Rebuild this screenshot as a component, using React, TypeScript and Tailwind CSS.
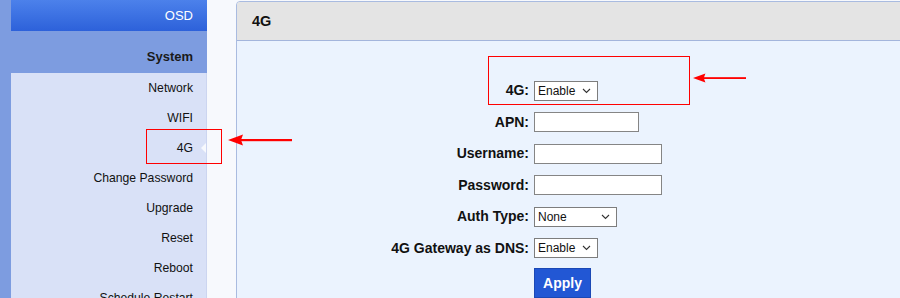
import React from "react";

const menu = ["Network", "WIFI", "4G", "Change Password", "Upgrade", "Reset", "Reboot", "Schedule Restart"];

type Row = { label: string; kind: "select" | "input"; value?: string; w: string };

const rows: Row[] = [
  { label: "4G:", kind: "select", value: "Enable", w: "w-[64px]" },
  { label: "APN:", kind: "input", w: "w-[105px]" },
  { label: "Username:", kind: "input", w: "w-[128px]" },
  { label: "Password:", kind: "input", w: "w-[128px]" },
  { label: "Auth Type:", kind: "select", value: "None", w: "w-[83px]" },
  { label: "4G Gateway as DNS:", kind: "select", value: "Enable", w: "w-[64px]" },
];

function Chevron() {
  return (
    <svg width="9" height="6" viewBox="0 0 9 6" className="shrink-0">
      <path d="M1 1 L4.5 4.5 L8 1" fill="none" stroke="#333" strokeWidth="1.1" />
    </svg>
  );
}

function Field({ row }: { row: Row }) {
  if (row.kind === "select") {
    return (
      <div
        className={`${row.w} h-[20px] bg-white border border-[#7d7d7d] flex items-center justify-between pl-[3px] pr-[6px] text-[12px] text-[#111]`}
      >
        <span>{row.value}</span>
        <Chevron />
      </div>
    );
  }
  return <div className={`${row.w} h-[20px] bg-white border border-[#858585]`} />;
}

function RedArrow({ className }: { className: string }) {
  return (
    <svg width="64" height="12" viewBox="0 0 64 12" className={className}>
      <path d="M0 6 L15 0.5 L13 6 L15 11.5 Z" fill="#f00" />
      <rect x="12" y="5" width="52" height="2.2" fill="#f00" />
    </svg>
  );
}

export default function App() {
  return (
    <div className="relative w-[900px] h-[298px] overflow-hidden bg-[#f7f9fd] flex font-['Liberation_Sans',Arial,sans-serif] text-[#111]">
      {/* sidebar */}
      <aside className="w-[207px] shrink-0 bg-[#7d9ce0] pl-[11px] flex flex-col">
        <div className="h-[31px] shrink-0 bg-linear-to-b from-[#4c81eb] to-[#2d61da] text-white text-[13px] flex items-center justify-end pr-[14px]">
          OSD
        </div>
        <div className="h-[42px] shrink-0 flex items-center justify-end pt-[10px] pr-[14px] text-[13px] font-bold text-[#1a1a1a]">
          System
        </div>
        <ul className="flex-1 bg-[#d9e1f7] border-r border-[#ccd5f0]">
          {menu.map((m) => (
            <li key={m} className="relative h-[30px] flex items-center justify-end pr-[13px] text-[12.2px]">
              {m}
              {m === "4G" && (
                <span className="absolute right-0 top-[10px] w-0 h-0 border-y-[5px] border-y-transparent border-r-[5px] border-r-[#f7f9fd]" />
              )}
            </li>
          ))}
        </ul>
      </aside>

      {/* main panel */}
      <section className="ml-[29px] mt-px w-[680px] shrink-0 h-[400px] border border-[#a9bbe0] rounded-t-[4px] bg-[#ebf3fe]">
        <div className="h-[39px] bg-[#e4e4e4] border-b border-[#a3b5dc] rounded-t-[3px] flex items-center pl-[15px] pt-px text-[14.5px] font-bold">
          4G
        </div>
        <div className="pt-[34px] grid grid-cols-[292px_1fr] gap-x-[5px]">
          {rows.map((r) => (
            <React.Fragment key={r.label}>
              <div className="h-[31.5px] flex items-center justify-end text-[14px] font-bold">{r.label}</div>
              <div className="h-[31.5px] flex items-center">
                <Field row={r} />
              </div>
            </React.Fragment>
          ))}
          <div />
          <div className="pt-[4px]">
            <button className="h-[30px] w-[57px] bg-[#2257d4] border border-[#1b48b5] text-white font-bold text-[14px]">
              Apply
            </button>
          </div>
        </div>
      </section>

      {/* annotations */}
      <div className="absolute left-[146px] top-[129px] w-[76px] h-[35px] border border-[#f00]" />
      <RedArrow className="absolute left-[228px] top-[134px]" />
      <div className="absolute left-[488px] top-[56px] w-[202px] h-[49px] border border-[#f00]" />
      <RedArrow className="absolute left-[693px] top-[72px] w-[53px]" />
    </div>
  );
}
